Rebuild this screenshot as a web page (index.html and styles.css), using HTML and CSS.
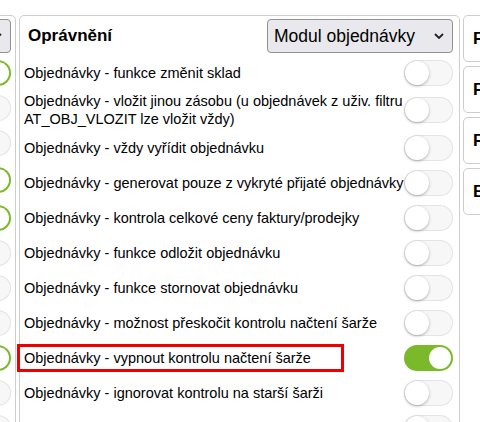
FILE: index.html
```html
<!DOCTYPE html>
<html lang="cs">
<head>
<meta charset="utf-8">
<title>Oprávnění</title>
<link rel="stylesheet" href="styles.css">
</head>
<body>
<div class="board">
  <section class="panel panel-side">
    <div class="panel-head">
      <h2 class="title">Oprávnění</h2>
      <div class="select"><span>Modul sklad</span><svg class="chev" viewBox="0 0 10 6" width="10" height="6"><path d="M1 1l4 4 4-4" fill="none" stroke="#222" stroke-width="1.8"/></svg></div>
    </div>
    <ul class="rows">
      <li class="row"><span class="label">Sklad - přístup</span><span class="toggle on"></span></li>
      <li class="row"><span class="label">Sklad - úpravy</span><span class="toggle"></span></li>
      <li class="row"><span class="label">Sklad - mazání</span><span class="toggle"></span></li>
      <li class="row"><span class="label">Sklad - inventura<br>a přecenění</span><span class="toggle on"></span></li>
      <li class="row"><span class="label">Sklad - převodky</span><span class="toggle on"></span></li>
      <li class="row"><span class="label">Sklad - výdejky</span><span class="toggle"></span></li>
      <li class="row"><span class="label">Sklad - příjemky</span><span class="toggle"></span></li>
      <li class="row"><span class="label">Sklad - ceny</span><span class="toggle"></span></li>
      <li class="row"><span class="label">Sklad - šarže</span><span class="toggle on"></span></li>
      <li class="row"><span class="label">Sklad - rezervace</span><span class="toggle"></span></li>
      <li class="row"><span class="label">Sklad - export</span><span class="toggle"></span></li>
    </ul>
  </section>

  <section class="panel">
    <div class="panel-head">
      <h2 class="title">Oprávnění</h2>
      <div class="select"><span>Modul objednávky</span><svg class="chev" viewBox="0 0 10 6" width="10" height="6"><path d="M1 1l4 4 4-4" fill="none" stroke="#222" stroke-width="1.8"/></svg></div>
    </div>
    <ul class="rows">
      <li class="row"><span class="label">Objednávky - funkce změnit sklad</span><span class="toggle"></span></li>
      <li class="row"><span class="label">Objednávky - vložit jinou zásobu (u objednávek z uživ. filtru<br>AT_OBJ_VLOZIT lze vložit vždy)</span><span class="toggle"></span></li>
      <li class="row"><span class="label">Objednávky - vždy vyřídit objednávku</span><span class="toggle"></span></li>
      <li class="row"><span class="label">Objednávky - generovat pouze z vykryté přijaté objednávky</span><span class="toggle"></span></li>
      <li class="row"><span class="label">Objednávky - kontrola celkové ceny faktury/prodejky</span><span class="toggle"></span></li>
      <li class="row"><span class="label">Objednávky - funkce odložit objednávku</span><span class="toggle"></span></li>
      <li class="row"><span class="label">Objednávky - funkce stornovat objednávku</span><span class="toggle"></span></li>
      <li class="row"><span class="label">Objednávky - možnost přeskočit kontrolu načtení šarže</span><span class="toggle"></span></li>
      <li class="row"><span class="label marked">Objednávky - vypnout kontrolu načtení šarže</span><span class="toggle on"></span></li>
      <li class="row"><span class="label">Objednávky - ignorovat kontrolu na starší šarži</span><span class="toggle"></span></li>
      <li class="row"><span class="label">Objednávky - zobrazit historii objednávky</span><span class="toggle"></span></li>
    </ul>
  </section>

  <aside class="cards">
    <div class="card">Faktury</div>
    <div class="card">Firmy</div>
    <div class="card">Finance</div>
    <div class="card">Eshop</div>
  </aside>
</div>
</body>
</html>
```
FILE: styles.css
```css
html, body {
  margin: 0;
  height: 100%;
  overflow: hidden;
  background: #fff;
}

body {
  font-family: "Liberation Sans", Arial, sans-serif;
  color: #000;
}

.board {
  display: flex;
  align-items: flex-start;
  gap: 3px;
  padding-top: 15px;
  margin-left: -425px;
}

.panel {
  flex: 0 0 441px;
  min-width: 0;
  box-sizing: border-box;
  height: 520px;
  border: 1px solid #cdcdcd;
  border-radius: 5px;
  padding: 0 6px 0 4px;
}

.panel-side {
  padding-right: 4px;
}

.panel-head {
  display: flex;
  align-items: center;
  justify-content: space-between;
  padding: 3px 0 2px 4px;
}

.title {
  margin: 0;
  font-size: 17px;
  font-weight: bold;
}

.select {
  box-sizing: border-box;
  width: 186px;
  height: 34px;
  display: flex;
  align-items: center;
  justify-content: space-between;
  padding: 0 8px 0 6px;
  border: 1px solid #8f8f9d;
  border-radius: 4px;
  background: #e9e9ed;
  font-size: 17.5px;
}

.chev {
  display: block;
}

.rows {
  list-style: none;
  margin: 0;
  padding: 0;
}

.row {
  box-sizing: border-box;
  min-height: 35px;
  padding: 2px 0;
  display: flex;
  align-items: center;
  justify-content: space-between;
  gap: 2px;
  font-size: 14.5px;
  line-height: 18px;
}

.label {
  white-space: nowrap;
  min-width: 0;
}

.label.marked {
  box-sizing: border-box;
  width: 327px;
  margin-left: -7px;
  padding: 2px 4px;
  border: 3px solid #ee0000;
}

.toggle {
  position: relative;
  flex: none;
  width: 49px;
  height: 26px;
  border-radius: 13px;
  background: #f7f7f7;
  box-shadow: inset 0 0 0 1px #e4e4e4;
}

.toggle::after {
  content: "";
  position: absolute;
  top: 1px;
  left: 1px;
  width: 24px;
  height: 24px;
  border-radius: 50%;
  background: #fff;
  box-shadow: 0 1px 3px rgba(0, 0, 0, 0.3);
}

.toggle.on {
  background: #7ab929;
  box-shadow: none;
}

.toggle.on::after {
  top: 2px;
  left: 25px;
  width: 22px;
  height: 22px;
  box-shadow: none;
}

.cards {
  flex: 0 0 200px;
  display: flex;
  flex-direction: column;
  gap: 4px;
}

.card {
  box-sizing: border-box;
  height: 47px;
  display: flex;
  align-items: center;
  padding-left: 9px;
  border: 1px solid #cdcdcd;
  border-radius: 5px;
  font-size: 17px;
  font-weight: bold;
}
```
